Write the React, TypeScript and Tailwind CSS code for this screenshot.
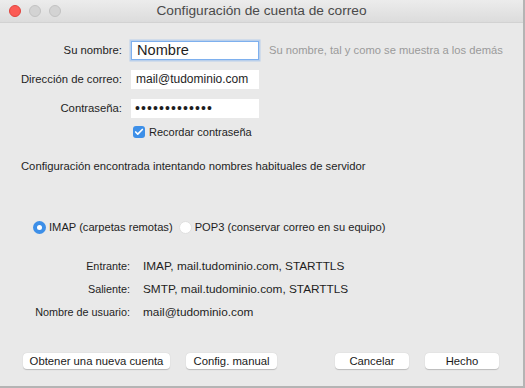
import { Check } from "lucide-react";

function Light({ color, border }: { color: string; border: string }) {
  return <div className={`h-[12px] w-[12px] rounded-full border ${color} ${border}`} />;
}

function Label({ text }: { text: string }) {
  return <div className="text-right text-[11.3px] leading-[19px]">{text}</div>;
}

function Radio({ checked, label }: { checked?: boolean; label: string }) {
  return (
    <div className="flex items-center gap-[3px]">
      {checked ? (
        <div className="flex h-[13px] w-[13px] items-center justify-center rounded-full bg-[#3d8fe8]">
          <div className="h-[5px] w-[5px] rounded-full bg-white" />
        </div>
      ) : (
        <div className="h-[13px] w-[13px] rounded-full border border-[#e0e0e0] bg-white" />
      )}
      <span>{label}</span>
    </div>
  );
}

function MacButton({ label, width }: { label: string; width: string }) {
  return (
    <button className={`${width} h-[16px] rounded-[4px] bg-white text-[11.3px] leading-[16px] text-[#1a1a1a] shadow-[0_0.5px_1px_rgba(0,0,0,0.2)]`}>
      {label}
    </button>
  );
}

export default function App() {
  return (
    <div
      className="flex h-[388px] w-[525px] flex-col overflow-hidden border-r-2 border-b-2 border-[#b4b4b4] bg-[#e9e9e9] text-[11.3px] text-[#1e1e1e]"
      style={{ fontFamily: '"Liberation Sans", Arial, sans-serif' }}
    >
      {/* title bar */}
      <div className="relative flex h-[23px] shrink-0 items-center border-b border-[#d2d2d2] bg-gradient-to-b from-[#ececec] to-[#dcdcdc]">
        <div className="flex gap-[8px] pl-[9px]">
          <Light color="bg-[#fc5b55]" border="border-[#e0443e]" />
          <Light color="bg-[#d3d3d3]" border="border-[#c2c2c2]" />
          <Light color="bg-[#d3d3d3]" border="border-[#c2c2c2]" />
        </div>
        <div className="absolute inset-0 flex items-center justify-center text-[13.7px] text-[#4a4a4a]">
          Configuración de cuenta de correo
        </div>
      </div>

      {/* account form */}
      <div className="mt-[18px] grid shrink-0 grid-cols-[122px_128px_auto] items-center gap-x-[9px] gap-y-[10px]">
        <Label text="Su nombre:" />
        <div className="h-[19px] border-[1.5px] border-[#7eb0ee] bg-white pl-[5px] text-[14.6px] leading-[16px] shadow-[0_0_0_1.5px_rgba(126,176,238,0.45)]">
          Nombre
        </div>
        <div className="pl-[1px] text-[11.2px] text-[#9a9a9a]">Su nombre, tal y como se muestra a los demás</div>
        <Label text="Dirección de correo:" />
        <div className="h-[19px] bg-white pl-[5px] text-[12px] leading-[19px]">mail@tudominio.com</div>
        <div />
        <Label text="Contraseña:" />
        <div className="h-[19px] bg-white pl-[4px] text-[14px] leading-[19px] tracking-[1.1px]">•••••••••••••</div>
        <div />
      </div>
      <div className="mt-[7px] flex h-[14px] shrink-0 items-center gap-[4px] pl-[133px] text-[11px]">
        <div className="flex h-[12px] w-[12px] items-center justify-center rounded-[3px] bg-[#3d8fe8]">
          <Check className="h-[10px] w-[10px] text-white" strokeWidth={4} />
        </div>
        <span>Recordar contraseña</span>
      </div>

      <div className="mt-[20px] shrink-0 pl-[21px] text-[11.25px] leading-[15px]">
        Configuración encontrada intentando nombres habituales de servidor
      </div>

      <div className="mt-[46px] flex h-[15px] shrink-0 gap-[6px] pl-[33px] text-[11.15px]">
        <Radio checked label="IMAP (carpetas remotas)" />
        <Radio label="POP3 (conservar correo en su equipo)" />
      </div>

      {/* server details */}
      <div className="mt-[24px] grid shrink-0 grid-cols-[130px_auto] gap-x-[13px] gap-y-[8px] leading-[15px]">
        <div className="text-right text-[10.8px]">Entrante:</div>
        <div className="text-[11.8px]">IMAP, mail.tudominio.com, STARTTLS</div>
        <div className="text-right text-[10.8px]">Saliente:</div>
        <div className="text-[11.8px]">SMTP, mail.tudominio.com, STARTTLS</div>
        <div className="text-right text-[10.8px]">Nombre de usuario:</div>
        <div className="text-[11.8px]">mail@tudominio.com</div>
      </div>

      {/* buttons */}
      <div className="mt-[33px] flex shrink-0 items-center pl-[23px] pr-[24px]">
        <MacButton label="Obtener una nueva cuenta" width="w-[147px]" />
        <div className="ml-[16px]">
          <MacButton label="Config. manual" width="w-[91px]" />
        </div>
        <div className="ml-auto flex gap-[16px]">
          <MacButton label="Cancelar" width="w-[74px]" />
          <MacButton label="Hecho" width="w-[74px]" />
        </div>
      </div>
    </div>
  );
}
